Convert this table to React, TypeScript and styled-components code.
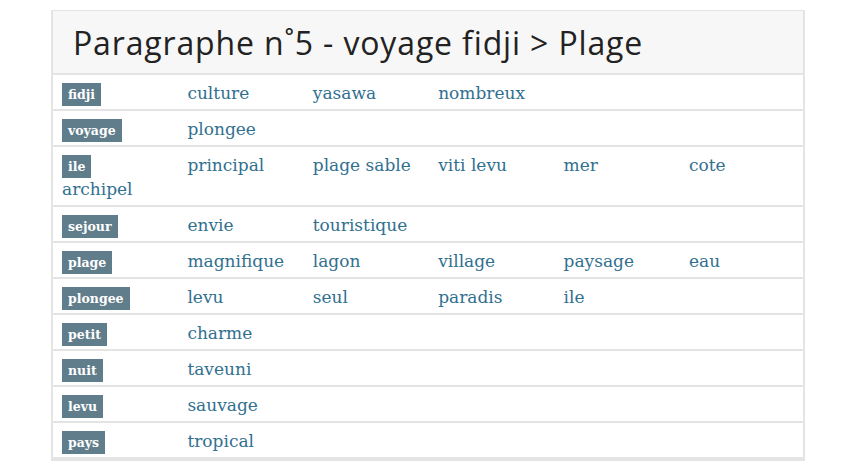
import React from 'react';
import styled, { createGlobalStyle } from 'styled-components';

const GlobalStyle = createGlobalStyle`
  body {
    margin: 0;
    background: #fff;
  }
`;

const Page = styled.div`
  padding: 10px 0 0 51px;
`;

const Panel = styled.div`
  width: 750px;
  border: 2px solid #e4e4e4;
  border-top: 1px solid #e4e4e4;
  overflow: hidden;
`;

const Header = styled.div`
  height: 62px;
  background: #f7f7f7;
  border-bottom: 2px solid #e4e4e4;
  display: flex;
  align-items: center;
  padding-left: 20px;
`;

const Title = styled.h1`
  margin: 0;
  font-family: 'Open Sans', 'DejaVu Sans', sans-serif;
  font-weight: 400;
  font-size: 32px;
  color: #222;
  letter-spacing: 0.85px;
`;

const Row = styled.div`
  display: grid;
  grid-template-columns: repeat(6, 125.4px);
  grid-auto-rows: 24px;
  padding: 5px 0 5px 9px;
  border-bottom: 2px solid #e4e4e4;
  line-height: 24px;
`;

const Cell = styled.div`
  font-family: 'DejaVu Serif', 'Liberation Serif', serif;
  font-size: 17px;
  color: #31708f;
  white-space: nowrap;
  padding-top: 1px;
`;

const Badge = styled.span`
  display: inline-block;
  margin-top: 2px;
  height: 23px;
  line-height: 23px;
  padding: 0 6px;
  background: #607d8b;
  color: #fff;
  font-family: 'DejaVu Serif', 'Liberation Serif', serif;
  font-weight: bold;
  font-size: 12.5px;
  vertical-align: top;
`;

const rows: [string, string[]][] = [
  ['fidji', ['culture', 'yasawa', 'nombreux']],
  ['voyage', ['plongee']],
  ['ile', ['principal', 'plage sable', 'viti levu', 'mer', 'cote', 'archipel']],
  ['sejour', ['envie', 'touristique']],
  ['plage', ['magnifique', 'lagon', 'village', 'paysage', 'eau']],
  ['plongee', ['levu', 'seul', 'paradis', 'ile']],
  ['petit', ['charme']],
  ['nuit', ['taveuni']],
  ['levu', ['sauvage']],
  ['pays', ['tropical']],
];

export default function App() {
  return (
    <Page>
      <GlobalStyle />
      <Panel>
        <Header>
          <Title>Paragraphe n˚5 - voyage fidji &gt; Plage</Title>
        </Header>
        {rows.map(([tag, words]) => (
          <Row key={tag}>
            <Cell>
              <Badge>{tag}</Badge>
            </Cell>
            {words.map((w) => (
              <Cell key={w}>{w}</Cell>
            ))}
          </Row>
        ))}
      </Panel>
    </Page>
  );
}
